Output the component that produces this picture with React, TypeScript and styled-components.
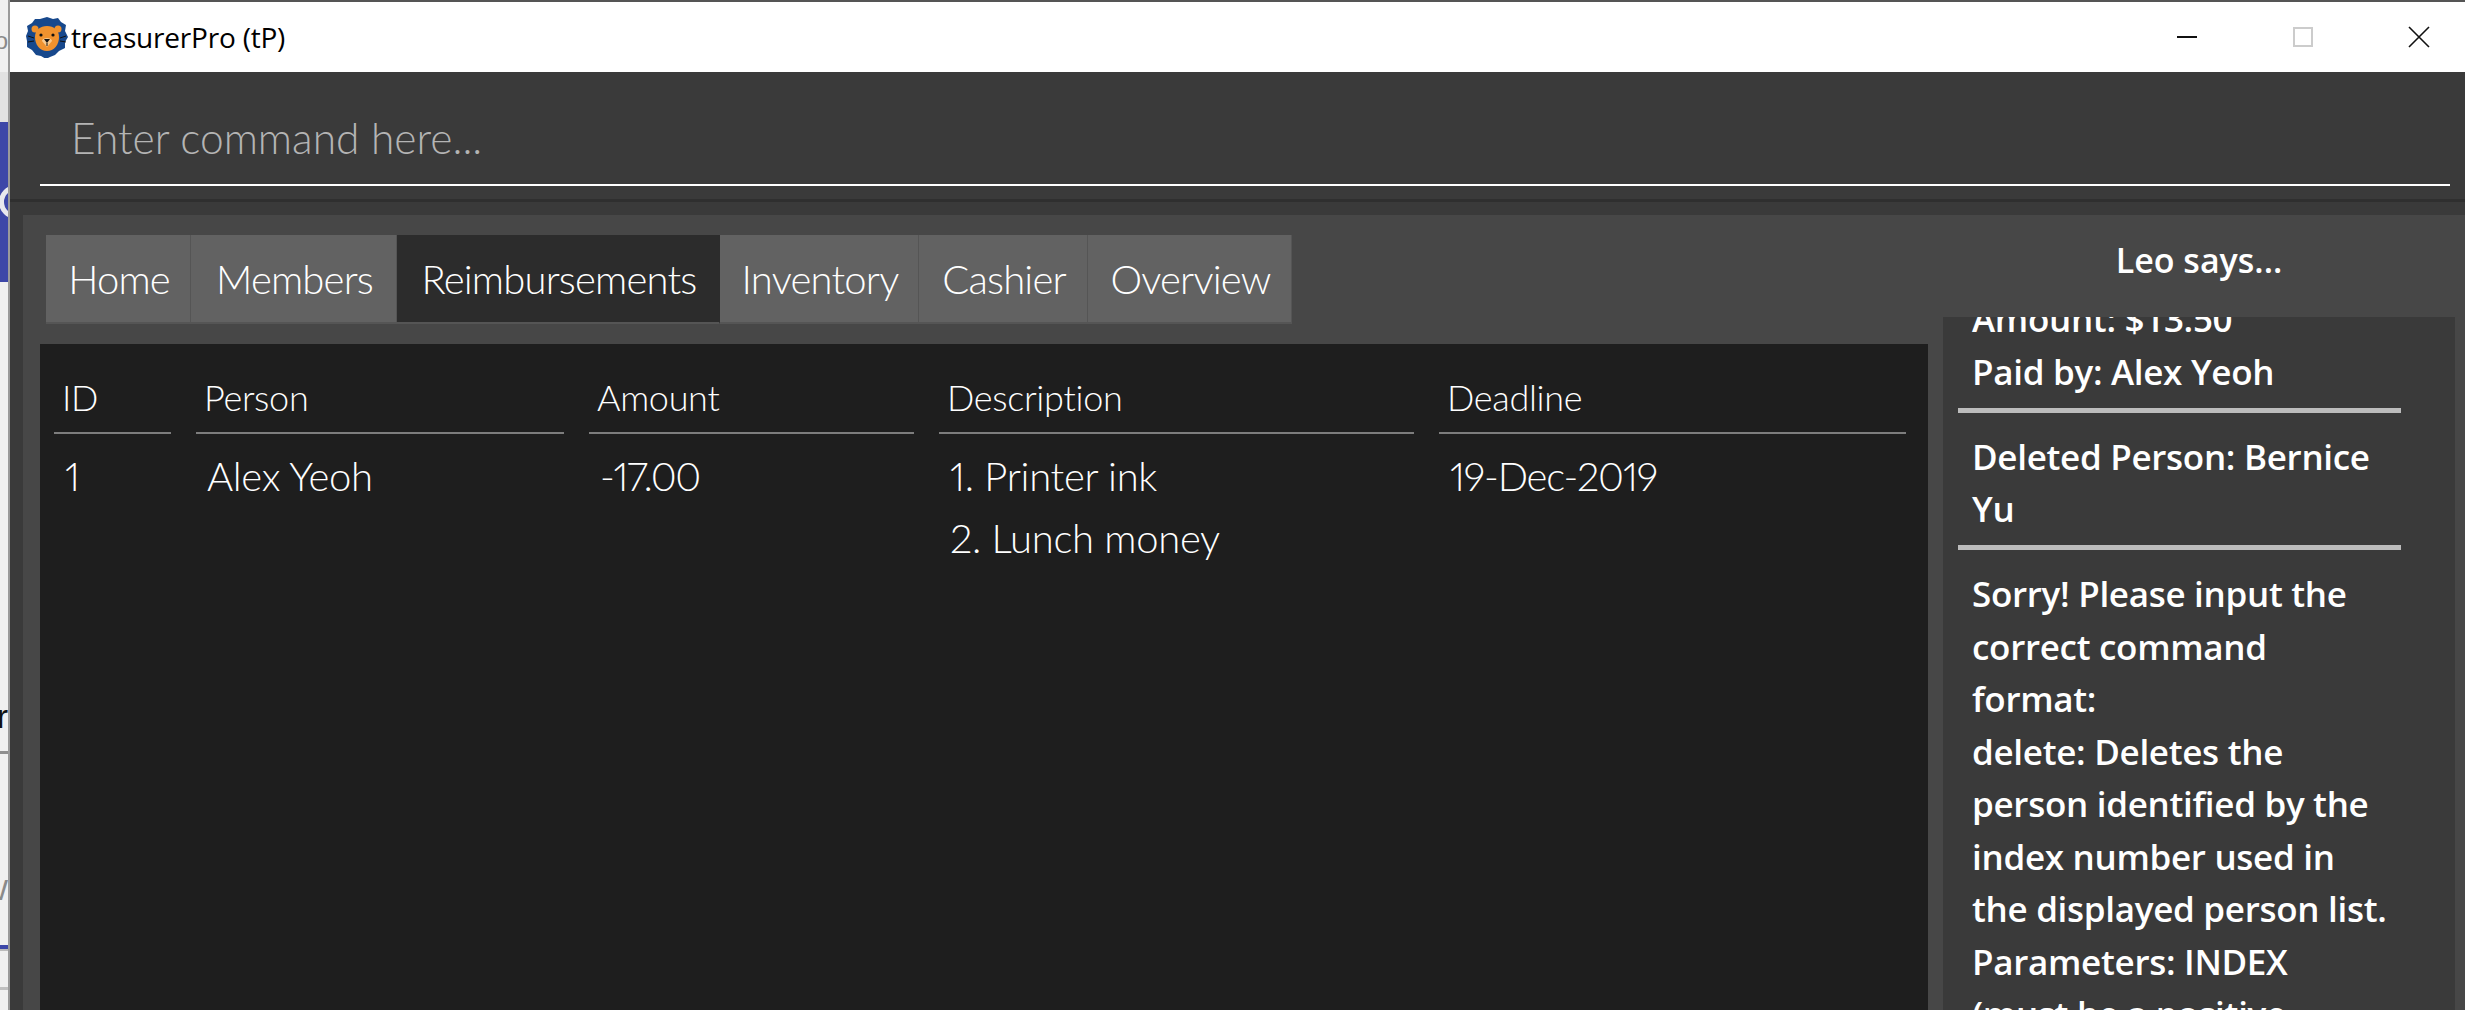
import { createGlobalStyle, styled } from "styled-components";

const GlobalStyle = createGlobalStyle`
  html, body {
    margin: 0;
    height: 1010px;
    overflow: hidden;
    background: #3a3a3a;
  }
  * { box-sizing: border-box; }
`;

const LIGHT_FONT = `Lato, "Open Sans", sans-serif`;
const UI_FONT = `"Open Sans", "Noto Sans", sans-serif`;

const Screen = styled.div`
  display: flex;
  width: 2465px;
  height: 1010px;
  overflow: hidden;
`;

/* the browser window peeking out behind the app */
const BehindWindow = styled.div`
  width: 10px;
  flex-shrink: 0;
  display: flex;
  flex-direction: column;
  background: #f0f0f0;
  border-right: 2px solid #9a9a9a;
  overflow: hidden;
`;

const Band = styled.div<{ $h: number; $bg?: string }>`
  height: ${(p) => p.$h}px;
  flex-shrink: 0;
  background: ${(p) => p.$bg ?? "transparent"};
  display: flex;
  justify-content: flex-end;
  align-items: center;
  overflow: hidden;
`;

const PeekGlyph = styled.span<{ $color: string; $size: number }>`
  font-family: "Liberation Sans", sans-serif;
  font-size: ${(p) => p.$size}px;
  line-height: 1;
  color: ${(p) => p.$color};
  white-space: nowrap;
`;

const Ring = styled.div`
  width: 34px;
  height: 34px;
  flex-shrink: 0;
  border: 5px solid #e8e8ee;
  border-radius: 50%;
  margin-right: -25px;
`;

const AppWindow = styled.div`
  flex: 1;
  min-width: 0;
  display: flex;
  flex-direction: column;
`;

const TitleBar = styled.div`
  height: 72px;
  flex-shrink: 0;
  display: flex;
  align-items: center;
  background: #fff;
  border-top: 2px solid #555;
  padding-left: 16px;
`;

const Title = styled.div`
  margin-left: 3px;
  font-family: ${UI_FONT};
  font-size: 28px;
  letter-spacing: -0.2px;
  color: #000;
`;

const WindowControls = styled.div`
  margin-left: auto;
  margin-right: 16px;
  display: flex;
  align-items: center;
  gap: 56px;
`;

const ControlButton = styled.div`
  width: 60px;
  height: 40px;
  display: flex;
  align-items: center;
  justify-content: center;
`;

const CommandArea = styled.div`
  height: 130px;
  flex-shrink: 0;
  background: #3a3a3a;
  border-bottom: 3px solid #2f2f2f;
  padding: 0 15px 0 30px;
`;

const CommandField = styled.div`
  height: 114px;
  display: flex;
  align-items: center;
  padding: 18px 0 0 31px;
  border-bottom: 2px solid #fff;
`;

const Placeholder = styled.div`
  font-family: ${LIGHT_FONT};
  font-weight: 300;
  font-size: 42.5px;
  color: #b4b4b4;
`;

const Body = styled.div`
  flex: 1;
  min-height: 0;
  display: flex;
  background: #3a3a3a;
  padding: 13px 0 0 13px;
`;

const Panel = styled.div`
  flex: 1;
  min-width: 0;
  display: flex;
  background: #474747;
`;

const MainColumn = styled.div`
  width: 1905px;
  flex-shrink: 0;
  padding-left: 17px;
  display: flex;
  flex-direction: column;
`;

const TabBar = styled.div`
  display: flex;
  margin: 20px 0 20px 6px;
  height: 89px;
`;

const Tab = styled.div<{ $active?: boolean; $w: number }>`
  width: ${(p) => p.$w}px;
  display: flex;
  align-items: center;
  justify-content: center;
  padding-left: 2px;
  font-family: ${LIGHT_FONT};
  font-weight: 300;
  font-size: 40px;
  letter-spacing: -0.8px;
  color: #fff;
  background: ${(p) => (p.$active ? "#2c2c2c" : "#626262")};
  border-right: 1px solid ${(p) => (p.$active ? "#2c2c2c" : "#555")};
  border-bottom: 2px solid #555;
`;

const TableCard = styled.div`
  flex: 1;
  background: #1e1e1e;
  padding: 0 0 0 14px;
`;

const TableGrid = styled.div`
  display: grid;
  grid-template-columns: 117px 368px 325px 475px 467px;
  column-gap: 25px;
  font-family: ${LIGHT_FONT};
  font-weight: 300;
  color: #fff;
`;

const HeadCell = styled.div`
  height: 90px;
  padding: 31px 0 0 8px;
  font-size: 36px;
  line-height: 44px;
  letter-spacing: -0.3px;
  border-bottom: 2px solid #7d7d7d;
`;

const Cell = styled.div<{ $spacing?: number }>`
  padding: 11px 0 0 11px;
  font-size: 40px;
  line-height: 62px;
  font-variant-numeric: proportional-nums;
  letter-spacing: ${(p) => p.$spacing ?? -0.3}px;
`;

const SideColumn = styled.div`
  width: 512px;
  flex-shrink: 0;
  margin-left: 15px;
  display: flex;
  flex-direction: column;
`;

const SideHeading = styled.div`
  height: 102px;
  display: flex;
  align-items: center;
  justify-content: center;
  padding-bottom: 13px;
  font-family: ${UI_FONT};
  font-weight: 600;
  font-size: 34px;
  color: #fff;
`;

const MessageList = styled.div`
  flex: 1;
  min-height: 0;
  overflow: hidden;
  background: #3a3a3a;
`;

/* list is scrolled down a bit in the reference, first lines are cut off */
const MessageScroll = styled.div`
  margin-top: -24px;
  padding: 0 15px;
`;

const Message = styled.div`
  padding: 0 0 0 14px;
  font-family: ${UI_FONT};
  font-weight: 600;
  font-size: 35px;
  letter-spacing: -0.3px;
  line-height: 52.5px;
  color: #fff;
  white-space: pre-line;
`;

const Separator = styled.div`
  width: 443px;
  height: 5px;
  margin: 9.5px 0 18px;
  background: #bcbcbc;
`;

const Logo = () => (
  <svg width="42" height="42" viewBox="0 0 42 42">
    <path
      d="M21 1l6 2 5-1 3 4 5 3-1 6 3 6-3 5 0 6-6 3-4 4-5 2-4 2-5-3-5-1-4-5-5-3 0-6-1-5 2-5-1-5 5-3 3-4 5 0z"
      fill="#17488c"
    />
    <circle cx="9" cy="13" r="3.5" fill="#f0922e" />
    <circle cx="32" cy="13" r="3.5" fill="#f0922e" />
    <path
      d="M21 10c7 0 12 4 12 11 0 8-5 14-12 14S9 29 9 21c0-7 5-11 12-11z"
      fill="#f0922e"
    />
    <circle cx="15" cy="19" r="1.6" fill="#111" />
    <circle cx="27" cy="19" r="1.6" fill="#111" />
    <path d="M16 25c0-2 3-3 5-3s5 1 5 3l-5 6z" fill="#f9c98c" />
    <path d="M18 23h6l-3 4z" fill="#111" />
    <path
      d="M21 27v3M2 20l6 2M2 26l6-1M40 20l-6 2M40 26l-6-1"
      stroke="#111"
      strokeWidth="1"
      fill="none"
    />
  </svg>
);

const App = () => {
  return (
    <Screen>
      <GlobalStyle />
      <BehindWindow>
        <Band $h={33} />
        <Band $h={16}>
          <PeekGlyph $color="#8a8a8a" $size={24}>
            o
          </PeekGlyph>
        </Band>
        <Band $h={23} />
        <Band $h={50} $bg="#e2e2e2" />
        <Band $h={60} $bg="#3d47a8" />
        <Band $h={40} $bg="#3d47a8">
          <Ring />
        </Band>
        <Band $h={60} $bg="#3d47a8" />
        <Band $h={420} />
        <Band $h={28}>
          <PeekGlyph $color="#111" $size={34}>
            r
          </PeekGlyph>
        </Band>
        <Band $h={21} />
        <Band $h={3} $bg="#8f8f8f" />
        <Band $h={124} />
        <Band $h={24}>
          <PeekGlyph $color="#8a8a8a" $size={30}>
            W
          </PeekGlyph>
        </Band>
        <Band $h={43} />
        <Band $h={4} $bg="#3d47a8" />
        <Band $h={2} $bg="#bbbbbb" />
        <Band $h={36} />
        <Band $h={3} $bg="#c0c0c0" />
      </BehindWindow>
      <AppWindow>
        <TitleBar>
          <Logo />
          <Title>treasurerPro (tP)</Title>
          <WindowControls>
            <ControlButton>
              <svg width="20" height="2" viewBox="0 0 20 2">
                <rect width="20" height="2" fill="#111" />
              </svg>
            </ControlButton>
            <ControlButton>
              <svg width="20" height="20" viewBox="0 0 20 20">
                <rect x="1" y="1" width="18" height="18" fill="none" stroke="#ccc" strokeWidth="2" />
              </svg>
            </ControlButton>
            <ControlButton>
              <svg width="22" height="22" viewBox="0 0 22 22">
                <path d="M1 1l20 20M21 1L1 21" stroke="#111" strokeWidth="1.6" fill="none" />
              </svg>
            </ControlButton>
          </WindowControls>
        </TitleBar>
        <CommandArea>
          <CommandField>
            <Placeholder>Enter command here...</Placeholder>
          </CommandField>
        </CommandArea>
        <Body>
          <Panel>
            <MainColumn>
              <TabBar>
                <Tab $w={145}>Home</Tab>
                <Tab $w={206}>Members</Tab>
                <Tab $w={323} $active>
                  Reimbursements
                </Tab>
                <Tab $w={199}>Inventory</Tab>
                <Tab $w={169}>Cashier</Tab>
                <Tab $w={204}>Overview</Tab>
              </TabBar>
              <TableCard>
                <TableGrid>
                  <HeadCell>ID</HeadCell>
                  <HeadCell>Person</HeadCell>
                  <HeadCell>Amount</HeadCell>
                  <HeadCell>Description</HeadCell>
                  <HeadCell>Deadline</HeadCell>
                  <Cell>1</Cell>
                  <Cell>Alex Yeoh</Cell>
                  <Cell $spacing={-1.4}>-17.00</Cell>
                  <Cell>
                    1. Printer ink
                    <br />
                    2. Lunch money
                  </Cell>
                  <Cell $spacing={-1.2}>19-Dec-2019</Cell>
                </TableGrid>
              </TableCard>
            </MainColumn>
            <SideColumn>
              <SideHeading>Leo says...</SideHeading>
              <MessageList>
                <MessageScroll>
                  <Message>{"Amount: $13.50\nPaid by: Alex Yeoh"}</Message>
                  <Separator />
                  <Message>{"Deleted Person: Bernice\nYu"}</Message>
                  <Separator />
                  <Message>
                    {
                      "Sorry! Please input the\ncorrect command\nformat:\ndelete: Deletes the\nperson identified by the\nindex number used in\nthe displayed person list.\nParameters: INDEX\n(must be a positive"
                    }
                  </Message>
                </MessageScroll>
              </MessageList>
            </SideColumn>
          </Panel>
        </Body>
      </AppWindow>
    </Screen>
  );
};

export default App;
